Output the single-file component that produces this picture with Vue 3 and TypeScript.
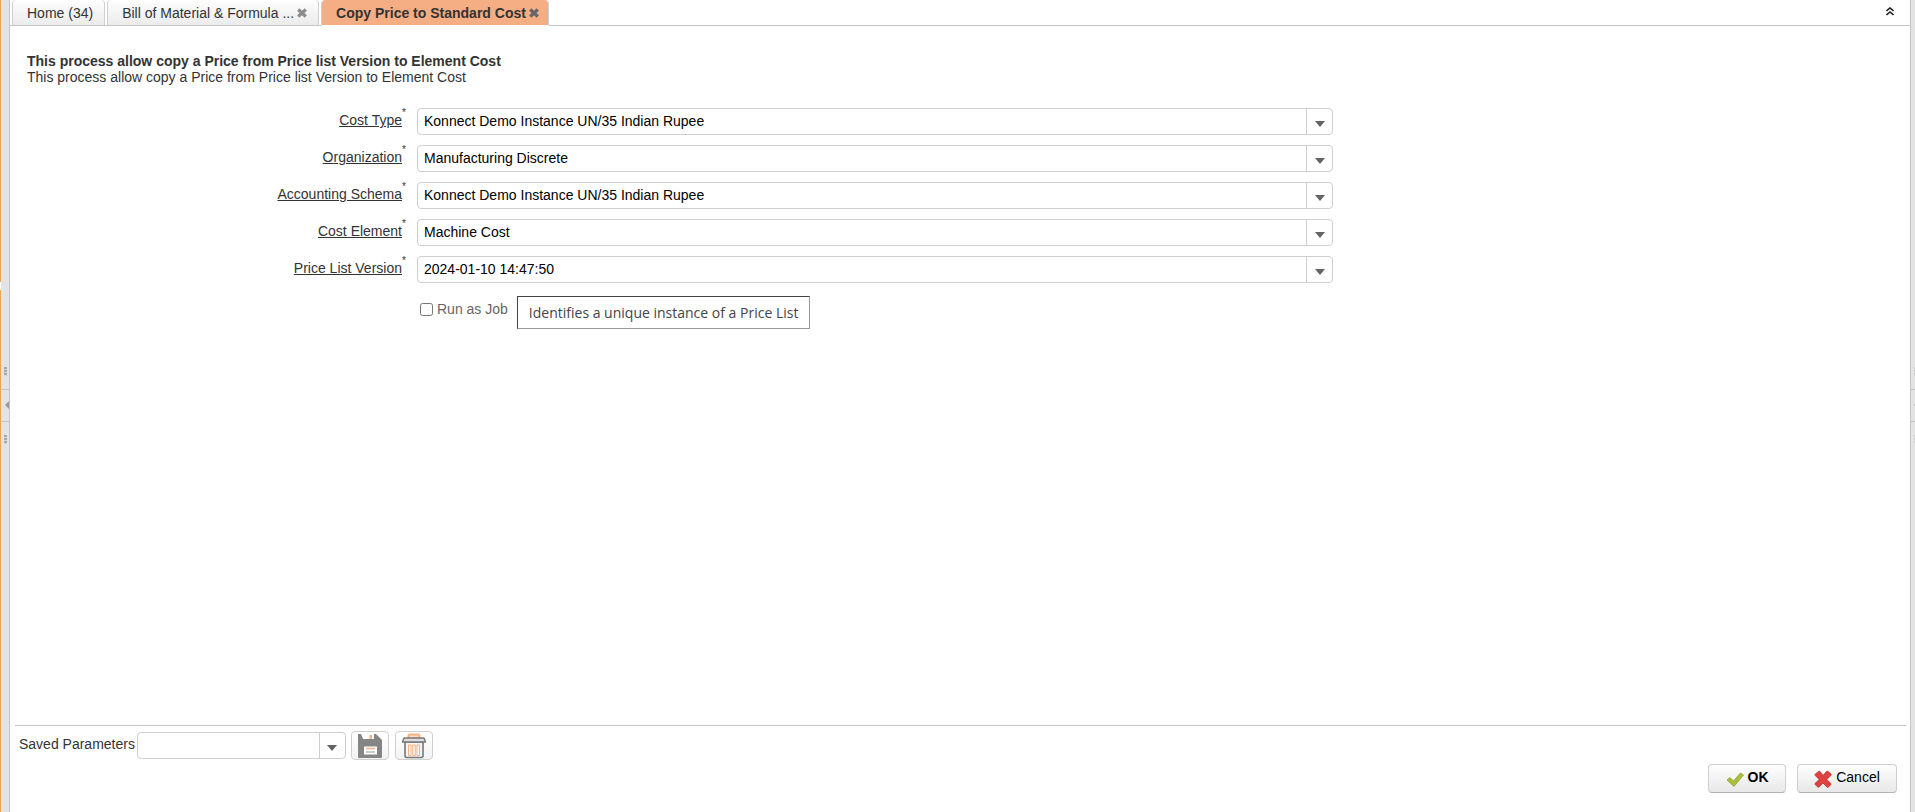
<script setup lang="ts">
import { ref } from 'vue'

interface Tab {
  title: string
  closable: boolean
  active: boolean
}

interface Field {
  id: string
  label: string
  value: string
}

const tabs: Tab[] = [
  { title: 'Home (34)', closable: false, active: false },
  { title: 'Bill of Material & Formula ...', closable: true, active: false },
  { title: 'Copy Price to Standard Cost', closable: true, active: true },
]

const fields = ref<Field[]>([
  { id: 'cost-type', label: 'Cost Type', value: 'Konnect Demo Instance UN/35 Indian Rupee' },
  { id: 'organization', label: 'Organization', value: 'Manufacturing Discrete' },
  { id: 'accounting-schema', label: 'Accounting Schema', value: 'Konnect Demo Instance UN/35 Indian Rupee' },
  { id: 'cost-element', label: 'Cost Element', value: 'Machine Cost' },
  { id: 'price-list-version', label: 'Price List Version', value: '2024-01-10 14:47:50' },
])

const runAsJob = ref(false)
const saved = ref('')
</script>

<template>
  <div class="shell">
    <div class="edge">
      <span class="edge-top"></span>
      <span class="edge-gap"></span>
      <span class="edge-bottom"></span>
    </div>
    <div class="splitter">
      <span class="grip"></span>
      <button class="collapse" type="button" aria-label="Collapse left panel">
        <svg width="4" height="8" viewBox="0 0 4 8"><path d="M4 0v8L0 4z" fill="#999" /></svg>
      </button>
      <span class="grip"></span>
    </div>

    <main class="panel">
      <nav class="tabs">
        <div v-for="tab in tabs" :key="tab.title" class="tab" :class="{ active: tab.active }">
          <button class="tab-title" type="button">{{ tab.title }}</button>
          <button v-if="tab.closable" class="tab-close" type="button" aria-label="Close tab">
            <svg width="10" height="10" viewBox="0 0 10 10">
              <path d="M1.200 1.500l7.600 7M8.800 1.500L1.200 8.500" stroke="currentColor" stroke-width="3.200" />
            </svg>
          </button>
        </div>
        <div class="tabs-rest">
          <button class="fold" type="button" aria-label="Collapse header">
            <svg width="8" height="9" viewBox="0 0 8 9" fill="none" stroke="#222" stroke-width="1.6">
              <path d="M0.5 4L4 1l3.5 3M0.5 8L4 5l3.5 3" />
            </svg>
          </button>
        </div>
      </nav>

      <header class="intro">
        <strong>This process allow copy a Price from Price list Version to Element Cost</strong>
        <span>This process allow copy a Price from Price list Version to Element Cost</span>
      </header>

      <form class="form" @submit.prevent>
        <div v-for="field in fields" :key="field.id" class="row">
          <div class="label">
            <label :for="field.id">{{ field.label }}</label><sup>*</sup>
          </div>
          <div class="combo">
            <select :id="field.id" v-model="field.value">
              <option>{{ field.value }}</option>
            </select>
            <span class="arrow"></span>
          </div>
        </div>
        <div class="row">
          <div class="job">
            <input id="run-as-job" v-model="runAsJob" type="checkbox" />
            <label for="run-as-job">Run as Job</label>
            <div class="tooltip" role="tooltip">Identifies a unique instance of a Price List</div>
          </div>
        </div>
      </form>

      <footer class="footer">
        <div class="saved">
          <label for="saved">Saved Parameters</label>
          <div class="combo saved-combo">
            <select id="saved" v-model="saved"><option value=""></option></select>
            <span class="arrow"></span>
          </div>
          <button class="btn icon-btn" type="button" aria-label="Save">
            <svg width="26" height="26" viewBox="0 0 26 26">
              <path d="M1 1h18l6 6v17q0 1-1 1H2q-1 0-1-1z" fill="#858585" />
              <path d="M4 1h13v5H6z" fill="#fff" />
              <path d="M12.500 2H15v4h-2.500z" fill="#f5b183" />
              <path d="M7 13.500h13v8H7z" fill="#fff" />
              <path d="M9 15.500h9" stroke="#f5b183" stroke-width="1.500" />
              <path d="M9 19h9" stroke="#bbb" stroke-width="1.500" />
            </svg>
          </button>
          <button class="btn icon-btn" type="button" aria-label="Delete">
            <svg width="26" height="26" viewBox="0 0 26 26" fill="none">
              <path d="M7.500 5V3q0-1.500 1.500-1.500h8q1.500 0 1.500 1.500v2" fill="#fbd9bd" stroke="#f5b183" stroke-width="2" />
              <path d="M4 9v14q0 1.500 1.500 1.500h15q1.500 0 1.500-1.500V9z" fill="#f4f4f4" stroke="#777" stroke-width="1.600" />
              <path d="M3 5h20l1.500 4h-23z" fill="#ddd" stroke="#777" stroke-width="1.400" stroke-linejoin="round" />
              <path d="M7.500 12h2.500v10.500H7.500zM11.800 12h2.500v10.500h-2.500zM16 12h2.500v10.500H16z" fill="#fff" stroke="#f5b183" stroke-linejoin="round" />
            </svg>
          </button>
        </div>
        <div class="actions">
          <button class="btn ok" type="button">
            <svg width="18" height="18" viewBox="0 0 18 18">
              <path d="M1 10l3-2.500 3.500 3.500L14.500 3 17.500 5 8 16.500z" fill="#a9c03a" stroke="#90a136" stroke-width=".8" stroke-linejoin="round" />
            </svg>
            <span>OK</span>
          </button>
          <button class="btn cancel" type="button">
            <svg width="18" height="18" viewBox="0 0 18 18">
              <path d="M4.500 1.500q1-.5 1.500 0L9 5.500l3.500-4q.5-.5 1.500 0L17 4q.5.7 0 1.300L12.800 9.500l4 4q.4.600 0 1.200l-2.500 2.500q-.6.400-1.200 0L9 13l-4 4q-.7.500-1.300 0L1.200 14.500q-.5-.6 0-1.200L5.200 9.500l-4-4q-.5-.6 0-1.300z" fill="#dd4343" stroke="#b93030" stroke-width=".8" />
            </svg>
            <span>Cancel</span>
          </button>
        </div>
      </footer>
    </main>

    <div class="splitter right">
      <span class="grip"></span>
      <button class="collapse" type="button" aria-label="Expand right panel">
        <svg width="4" height="8" viewBox="0 0 4 8"><path d="M0 0v8l4-4z" fill="#999" /></svg>
      </button>
      <span class="grip"></span>
    </div>
  </div>
</template>

<style>
body {
  margin: 0;
}
</style>

<style scoped>
.shell {
  display: flex;
  height: 100vh;
  overflow: hidden;
  background: #fff;
  color: #333;
  font: 14px/16px "Liberation Sans", Arial, sans-serif;
}
button,
select {
  font: inherit;
  color: inherit;
  margin: 0;
  padding: 0;
  border: 0;
  background: none;
}
svg {
  display: block;
}
.edge {
  display: flex;
  flex-direction: column;
  width: 1px;
}
.edge-top,
.edge-bottom {
  flex: 282;
  background: #e8a951;
}
.edge-bottom {
  flex: 522;
}
.edge-gap {
  flex: 0 0 8px;
  background: #fff;
}
.splitter {
  display: flex;
  flex: 0 0 9px;
  flex-direction: column;
  align-items: center;
  justify-content: center;
  gap: 13px;
  box-sizing: border-box;
  padding-bottom: 2px;
  background: #e3e3e3;
  border-right: 1px solid #c5c5c5;
}
.splitter.right {
  flex-basis: 5px;
  align-items: flex-start;
  border-right: 0;
  border-left: 1px solid #c5c5c5;
  overflow: hidden;
}
.grip {
  width: 3px;
  height: 9px;
  background: repeating-linear-gradient(#aaa 0 2px, #d4d4d4 2px 3px);
}
.right .grip {
  margin-left: 3px;
  opacity: 0.4;
}
.collapse {
  display: flex;
  align-items: center;
  justify-content: flex-end;
  align-self: stretch;
  height: 33px;
  border-top: 1px solid #c5c5c5;
  border-bottom: 1px solid #c5c5c5;
}
.right .collapse {
  justify-content: flex-start;
  padding-left: 3px;
}
.panel {
  display: flex;
  flex: 1;
  flex-direction: column;
  min-width: 0;
}
.tabs {
  display: flex;
  height: 26px;
  padding-left: 2px;
  box-sizing: border-box;
  background: linear-gradient(#c5c5c5, #c5c5c5) 0 100% / 312px 1px no-repeat;
}
.tab {
  display: flex;
  align-items: center;
  gap: 3px;
  margin-right: 2px;
  padding: 0 11px 0 14px;
  border: 1px solid #cfcfcf;
  border-top: 0;
  border-bottom-color: #c5c5c5;
  border-radius: 4px 4px 0 0;
  background: linear-gradient(#fefefe, #ebebeb);
}
.tab.active {
  margin: 0;
  padding-right: 9px;
  border-bottom-color: #fff;
  background: #f5ad83;
  background-clip: padding-box;
  font-weight: bold;
}
.tab-close {
  color: #8c8c8c;
}
.active .tab-close {
  color: #666;
}
.tabs-rest {
  display: flex;
  flex: 1;
  align-items: flex-start;
  justify-content: flex-end;
  padding: 7px 16px 0;
  border-bottom: 1px solid #c5c5c5;
}
.intro {
  display: flex;
  flex-direction: column;
  padding: 27px 17px 0;
}
.form {
  display: flex;
  flex-direction: column;
  gap: 10px;
  padding-top: 23px;
}
.row {
  display: grid;
  grid-template-columns: 397fr 916fr 567fr;
  column-gap: 10px;
  align-items: start;
}
.label {
  display: flex;
  justify-content: flex-end;
  padding: 4px 5px 0 0;
}
.label label {
  text-decoration: underline;
}
.label sup {
  width: 0;
  font-size: 10px;
  line-height: 2px;
}
.combo {
  position: relative;
  display: flex;
}
.combo select {
  flex: 1;
  min-width: 0;
  height: 27px;
  padding: 0 32px 2px 6px;
  border: 1px solid #cfcfcf;
  border-radius: 4px;
  background: #fff;
  color: #000;
  appearance: none;
}
.arrow {
  position: absolute;
  top: 1px;
  right: 1px;
  bottom: 1px;
  display: flex;
  align-items: center;
  justify-content: center;
  width: 26px;
  padding-top: 5px;
  box-sizing: border-box;
  border-left: 1px solid #cfcfcf;
  pointer-events: none;
}
.arrow::after {
  content: "";
  border: 5px solid transparent;
  border-top: 6px solid #636363;
  border-bottom: 0;
}
.job {
  position: relative;
  display: flex;
  grid-column: 2;
  align-items: center;
  justify-self: start;
  gap: 4px;
  padding: 8px 0 0 3px;
  color: #666;
}
.job input {
  width: 13px;
  height: 13px;
  margin: 0;
}
.tooltip {
  position: absolute;
  top: 3px;
  left: 100%;
  margin-left: 9px;
  padding: 5px 11px;
  border: 1px solid #444;
  border-right-color: #999;
  border-bottom-color: #999;
  background: #fff;
  color: #444;
  font: 14px/21px "Open Sans", "Noto Sans", sans-serif;
  white-space: nowrap;
}
.footer {
  margin: auto 4px 0 5px;
  padding: 5px 9px 19px 4px;
  border-top: 1px solid #c5c5c5;
}
.saved {
  display: flex;
  align-items: center;
}
.saved label {
  padding-bottom: 3px;
}
.saved-combo {
  width: 209px;
  margin-left: 2px;
}
.btn {
  display: flex;
  align-items: center;
  justify-content: center;
  height: 29px;
  box-sizing: border-box;
  border: 1px solid #cfcfcf;
  border-bottom-color: #b4b4b4;
  border-radius: 4px;
  background: linear-gradient(#fefefe, #e8e8e8);
  color: #000;
}
.icon-btn {
  width: 38px;
  margin-left: 5px;
  border-color: #cfcfcf;
  background: linear-gradient(#fff, #f3f3f3);
}
.icon-btn + .icon-btn {
  margin-left: 6px;
}
.actions {
  display: flex;
  justify-content: flex-end;
  gap: 11px;
  padding-top: 4px;
}
.actions .btn {
  gap: 4px;
}
.actions span {
  padding-bottom: 3px;
}
.ok {
  width: 78px;
  font-weight: bold;
}
.cancel {
  width: 100px;
}
</style>
